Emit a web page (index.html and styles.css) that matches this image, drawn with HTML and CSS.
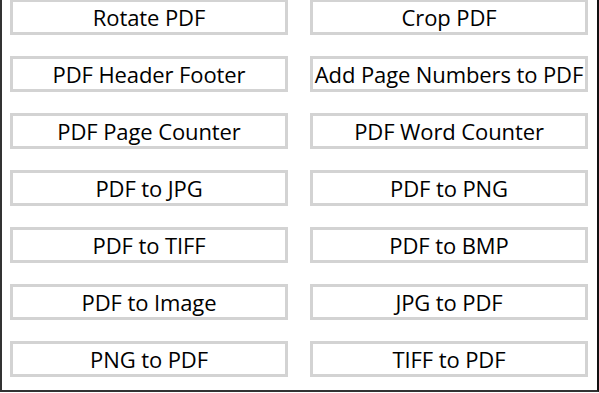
FILE: index.html
```html
<!DOCTYPE html>
<html lang="en">
<head>
    <meta charset="UTF-8">
    <title>PDF Tools</title>
    <link rel="stylesheet" href="styles.css">
</head>
<body>
    <div class="tools">
        <a class="tool" href="#">Rotate PDF</a>
        <a class="tool" href="#">Crop PDF</a>
        <a class="tool" href="#">PDF Header Footer</a>
        <a class="tool" href="#">Add Page Numbers to PDF</a>
        <a class="tool" href="#">PDF Page Counter</a>
        <a class="tool" href="#">PDF Word Counter</a>
        <a class="tool" href="#">PDF to JPG</a>
        <a class="tool" href="#">PDF to PNG</a>
        <a class="tool" href="#">PDF to TIFF</a>
        <a class="tool" href="#">PDF to BMP</a>
        <a class="tool" href="#">PDF to Image</a>
        <a class="tool" href="#">JPG to PDF</a>
        <a class="tool" href="#">PNG to PDF</a>
        <a class="tool" href="#">TIFF to PDF</a>
    </div>
</body>
</html>
```

FILE: styles.css
```css
body {
    margin: 0;
    font-family: "Open Sans", "Noto Sans", sans-serif;
}
.tools {
    width: 599px;
    height: 393px;
    box-sizing: border-box;
    border: 2px solid #333;
    border-top: none;
    border-right-color: #111;
    padding: 0 9px 13px 8px;
    margin-top: -1px;
    display: grid;
    grid-template-columns: 278px 278px;
    grid-auto-rows: 36px;
    column-gap: 22px;
    row-gap: 21px;
    align-content: start;
}
.tool {
    box-sizing: border-box;
    border: 3px solid #d3d3d3;
    background: #fff;
    color: #000;
    text-decoration: none;
    font-size: 22px;
    font-weight: 500;
    letter-spacing: -0.1px;
    display: flex;
    align-items: center;
    justify-content: center;
    white-space: nowrap;
}
```
